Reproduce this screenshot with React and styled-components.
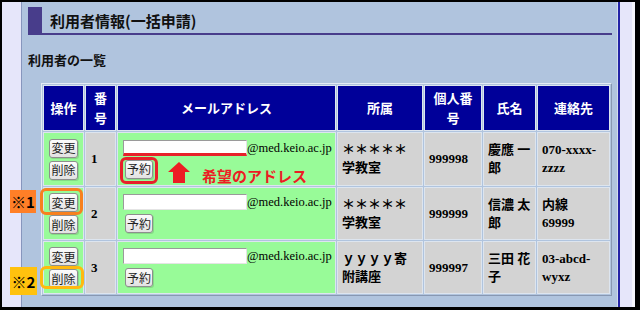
import React from 'react';
import styled, { createGlobalStyle } from 'styled-components';

const GlobalStyle = createGlobalStyle`
  html, body { margin: 0; padding: 0; background: #000; }
  body { font-family: "Noto Sans CJK JP", sans-serif; }
  * { box-sizing: border-box; }
`;

const Screen = styled.div`
  position: relative;
  width: 640px;
  height: 310px;
  padding: 2px 5px 3px 2px;
  background: #000;
`;

const Frame = styled.div`
  display: flex;
  height: 100%;
  background: #e6e6fa;
  padding-left: 19px;
  padding-right: 13px;
  border-right: 3px solid #f6f6fd;
`;

const Panel = styled.div`
  flex: 1;
  background: #b0c4de;
  border-left: 1px solid #8796bd;
  border-right: 2px solid #2323a6;
  box-shadow: inset -1px 0 0 #d2ddec;
  padding: 5px 6px 0 6px;
`;

const Heading = styled.h2`
  margin: 0;
  height: 28px;
  border-left: 14px solid #483d8b;
  border-bottom: 2px solid #483d8b;
  padding-left: 8px;
  font: bold 15px/27px "Noto Sans CJK JP", sans-serif;
  color: #111;
`;

const SubTitle = styled.h3`
  margin: 16px 0 14px;
  font: bold 13px/18px "Noto Sans CJK JP", sans-serif;
  color: #111;
`;

const Table = styled.table`
  margin-left: 13px;
  width: 571px;
  table-layout: fixed;
  border-collapse: separate;
  border-spacing: 1px;
  border: 1px solid;
  border-color: #e4ebf4 #8898b2 #8898b2 #e4ebf4;
`;

const HeadCell = styled.th`
  background: #000099;
  color: #fff;
  border: 1px solid #dde5ef;
  padding: 0;
  text-align: center;
  vertical-align: middle;
  white-space: pre;
  font: bold 13px/20px "Noto Sans CJK JP", sans-serif;
`;

const Row = styled.tr`
  height: ${(p) => p.$h}px;
`;

const Cell = styled.td`
  background: ${(p) => (p.$tone === 'green' ? '#98fb98' : '#d3d3d3')};
  border: 1px solid #dde5ef;
  padding: ${(p) => (p.$pad != null ? p.$pad : '0 4px')};
  vertical-align: middle;
  white-space: pre;
  color: #000;
  font: bold 13px/18px "Liberation Serif", "Noto Sans CJK JP", serif;
`;

const ButtonStack = styled.div`
  display: flex;
  flex-direction: column;
  align-items: center;
  gap: 3px;
`;

const Ring = styled.span`
  position: relative;
  display: inline-flex;
  &::after {
    content: '';
    display: ${(p) => (p.$ring ? 'block' : 'none')};
    position: absolute;
    top: ${(p) => (p.$ring ? -p.$ring.t : 0)}px;
    right: ${(p) => (p.$ring ? -p.$ring.r : 0)}px;
    bottom: ${(p) => (p.$ring ? -p.$ring.b : 0)}px;
    left: ${(p) => (p.$ring ? -p.$ring.l : 0)}px;
    border: 3px solid ${(p) => (p.$ring ? p.$ring.color : 'transparent')};
    border-radius: 6px;
    pointer-events: none;
  }
`;

const Btn = styled.button`
  width: ${(p) => p.$w || 29}px;
  height: 19px;
  padding: 0;
  font: 12px/1 "Noto Sans CJK JP", sans-serif;
  color: #222;
  background: linear-gradient(#fcfcfc, #e2e2e2);
  border: 1px solid #8e8e8e;
  border-radius: 3px;
  box-shadow: 1px 1px 0 rgba(0, 0, 0, 0.12);
`;

const EmailBlock = styled.div`
  display: flex;
  flex-direction: column;
  gap: 4px;
`;

const EmailLine = styled.div`
  display: flex;
  align-items: flex-end;
`;

const MailInput = styled.input`
  width: 124px;
  height: 16px;
  padding: 0;
  background: #fff;
  border: 1px solid;
  border-color: #9a9a9a #e4e4e4 #e4e4e4 #9a9a9a;
  ${(p) => (p.$mark ? 'border-bottom: 3px solid #e8202a;' : '')}
`;

const Domain = styled.span`
  font: 12.5px/15px "Liberation Serif", serif;
  color: #000;
`;

const ActionLine = styled.div`
  display: flex;
  align-items: flex-start;
  height: 19px;
  padding-left: 2px;
`;

const Arrow = styled.svg`
  display: block;
  margin: 2px 0 0 15px;
  flex: none;
`;

const Hint = styled.span`
  margin: 6px 0 0 12px;
  font: bold 15px/20px "Noto Sans CJK JP", sans-serif;
  color: #ed1c24;
`;

const Note = styled.div`
  position: absolute;
  left: 10px;
  top: ${(p) => p.$top}px;
  width: ${(p) => p.$w}px;
  height: ${(p) => p.$h}px;
  background: ${(p) => p.$bg};
  display: flex;
  align-items: center;
  justify-content: center;
  font: bold 15px/1 "Noto Sans CJK JP", sans-serif;
  color: #000;
`;

const headers = ['操作', '番\n号', 'メールアドレス', '所属', '個人番\n号', '氏名', '連絡先'];
const colWidths = [41, 31, 219, 86, 58, 53, 73];

const rows = [
  { no: '1', org: '＊＊＊＊＊\n学教室', pid: '999998', name: '慶應 一\n郎', tel: '070-xxxx-\nzzzz', h: 54, mark: true },
  { no: '2', org: '＊＊＊＊＊\n学教室', pid: '999999', name: '信濃 太\n郎', tel: '内線\n69999', h: 53, ring: 'change' },
  { no: '3', org: 'ｙｙｙｙ寄\n附講座', pid: '999997', name: '三田 花\n子', tel: '03-abcd-\nwyxz', h: 53, ring: 'delete' },
];

const RING_CHANGE = { color: '#f7811f', t: 5, r: 5, b: 3, l: 9 };
const RING_DELETE = { color: '#ffb90f', t: 3, r: 6, b: 1, l: 9 };
const RING_RESERVE = { color: '#e8202a', t: 3, r: 5, b: 5, l: 5 };

export default function App() {
  return (
    <>
      <GlobalStyle />
      <Screen>
        <Frame>
          <Panel>
            <Heading>利用者情報(一括申請)</Heading>
            <SubTitle>利用者の一覧</SubTitle>
            <Table>
              <colgroup>
                {colWidths.map((w, i) => (
                  <col key={i} style={{ width: w }} />
                ))}
              </colgroup>
              <thead>
                <Row $h={46}>
                  {headers.map((h) => (
                    <HeadCell key={h}>{h}</HeadCell>
                  ))}
                </Row>
              </thead>
              <tbody>
                {rows.map((r) => (
                  <Row key={r.no} $h={r.h}>
                    <Cell $tone="green" $pad="0">
                      <ButtonStack>
                        <Ring $ring={r.ring === 'change' ? RING_CHANGE : null}>
                          <Btn>変更</Btn>
                        </Ring>
                        <Ring $ring={r.ring === 'delete' ? RING_DELETE : null}>
                          <Btn>削除</Btn>
                        </Ring>
                      </ButtonStack>
                    </Cell>
                    <Cell $pad="0 5px">{r.no}</Cell>
                    <Cell $tone="green" $pad="0 5px">
                      <EmailBlock>
                        <EmailLine>
                          <MailInput type="text" $mark={r.mark} />
                          <Domain>@med.keio.ac.jp</Domain>
                        </EmailLine>
                        <ActionLine>
                          <Ring $ring={r.mark ? RING_RESERVE : null}>
                            <Btn $w={28}>予約</Btn>
                          </Ring>
                          {r.mark && (
                            <>
                              <Arrow width="22" height="21" viewBox="0 0 22 21">
                                <polygon points="11,0 22,10 17,10 17,21 5,21 5,10 0,10" fill="#ed1c24" />
                              </Arrow>
                              <Hint>希望のアドレス</Hint>
                            </>
                          )}
                        </ActionLine>
                      </EmailBlock>
                    </Cell>
                    <Cell>{r.org}</Cell>
                    <Cell>{r.pid}</Cell>
                    <Cell>{r.name}</Cell>
                    <Cell>{r.tel}</Cell>
                  </Row>
                ))}
              </tbody>
            </Table>
          </Panel>
        </Frame>
        <Note $top={190} $w={26} $h={23} $bg="#ff7f27">※1</Note>
        <Note $top={267} $w={27} $h={28} $bg="#ffc20e">※2</Note>
      </Screen>
    </>
  );
}
